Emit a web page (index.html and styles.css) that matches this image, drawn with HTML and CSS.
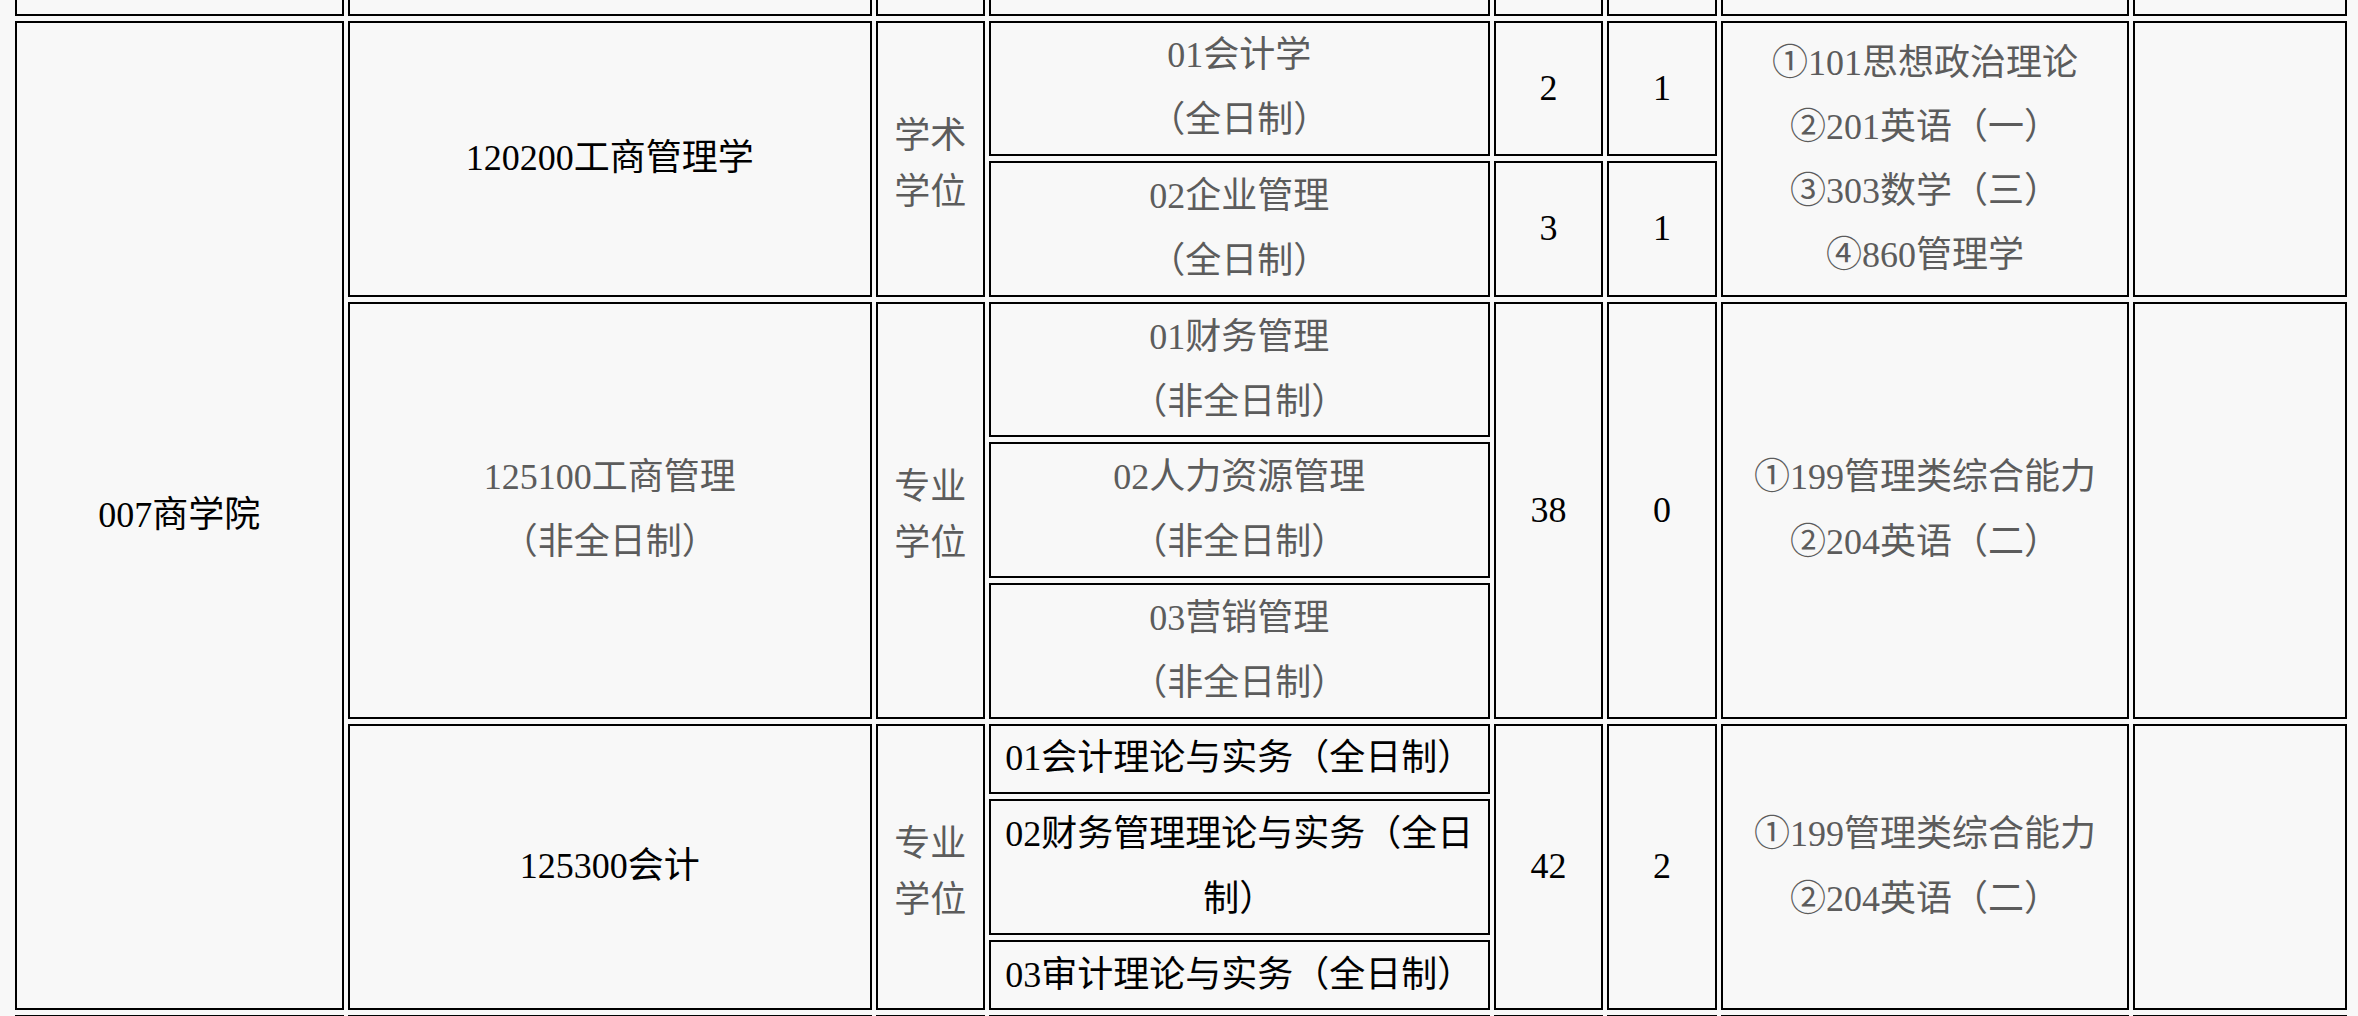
FILE: index.html
```html
<!DOCTYPE html>
<html lang="zh-CN">
<head>
<meta charset="utf-8">
<title>招生专业目录</title>
<link rel="stylesheet" href="styles.css">
</head>
<body>
<table class="sheet">
  <colgroup>
    <col class="c1"><col class="c2"><col class="c3"><col class="c4">
    <col class="c5"><col class="c6"><col class="c7"><col class="c8">
  </colgroup>
  <tbody>
    <tr>
      <td>&nbsp;</td><td>&nbsp;</td><td>&nbsp;</td><td>&nbsp;</td>
      <td>&nbsp;</td><td>&nbsp;</td><td>&nbsp;</td><td>&nbsp;</td>
    </tr>
    <tr>
      <td rowspan="8">007商学院</td>
      <td rowspan="2">120200工商管理学</td>
      <td rowspan="2" class="gray deg">学术<br>学位</td>
      <td class="gray">01会计学<br>（全日制）</td>
      <td>2</td>
      <td>1</td>
      <td rowspan="2" class="gray exam">①101思想政治理论<br>②201英语（一）<br>③303数学（三）<br>④860管理学</td>
      <td rowspan="2"></td>
    </tr>
    <tr>
      <td class="gray">02企业管理<br>（全日制）</td>
      <td>3</td>
      <td>1</td>
    </tr>
    <tr>
      <td rowspan="3" class="gray">125100工商管理<br>（非全日制）</td>
      <td rowspan="3" class="gray deg">专业<br>学位</td>
      <td class="gray">01财务管理<br>（非全日制）</td>
      <td rowspan="3">38</td>
      <td rowspan="3">0</td>
      <td rowspan="3" class="gray">①199管理类综合能力<br>②204英语（二）</td>
      <td rowspan="3"></td>
    </tr>
    <tr>
      <td class="gray">02人力资源管理<br>（非全日制）</td>
    </tr>
    <tr>
      <td class="gray">03营销管理<br>（非全日制）</td>
    </tr>
    <tr>
      <td rowspan="3">125300会计</td>
      <td rowspan="3" class="gray deg">专业<br>学位</td>
      <td>01会计理论与实务（全日制）</td>
      <td rowspan="3">42</td>
      <td rowspan="3">2</td>
      <td rowspan="3" class="gray">①199管理类综合能力<br>②204英语（二）</td>
      <td rowspan="3"></td>
    </tr>
    <tr>
      <td>02财务管理理论与实务（全日制）</td>
    </tr>
    <tr>
      <td>03审计理论与实务（全日制）</td>
    </tr>
    <tr>
      <td>&nbsp;</td><td>&nbsp;</td><td>&nbsp;</td><td>&nbsp;</td>
      <td>&nbsp;</td><td>&nbsp;</td><td>&nbsp;</td><td>&nbsp;</td>
    </tr>
  </tbody>
</table>
</body>
</html>
```

FILE: styles.css
```css
html,
body {
  margin: 0;
  padding: 0;
  background: #f8f8f8;
  overflow: hidden;
}

.sheet {
  margin: -60px 0 0 11px;
  width: 2340px;
  table-layout: fixed;
  border-collapse: separate;
  border-spacing: 4.5px 5.25px;
  font-family: "Liberation Serif", "Noto Sans CJK SC", serif;
  font-size: 36px;
  line-height: 65px;
  color: #000;
}

.c1 { width: 328px; }
.c2 { width: 523px; }
.c3 { width: 109px; }
.c4 { width: 500px; }
.c5 { width: 109px; }
.c6 { width: 109.5px; }
.c7 { width: 407.5px; }
.c8 { width: 213.5px; }

.sheet td {
  border: 2px solid #000;
  padding: 0.8px 2px;
  text-align: center;
  vertical-align: middle;
}

.sheet td.gray {
  color: #5c5c5c;
}

.sheet td.deg {
  line-height: 56px;
  padding-top: 10px;
  padding-bottom: 0;
}

.sheet td.exam {
  line-height: 64px;
}
```
